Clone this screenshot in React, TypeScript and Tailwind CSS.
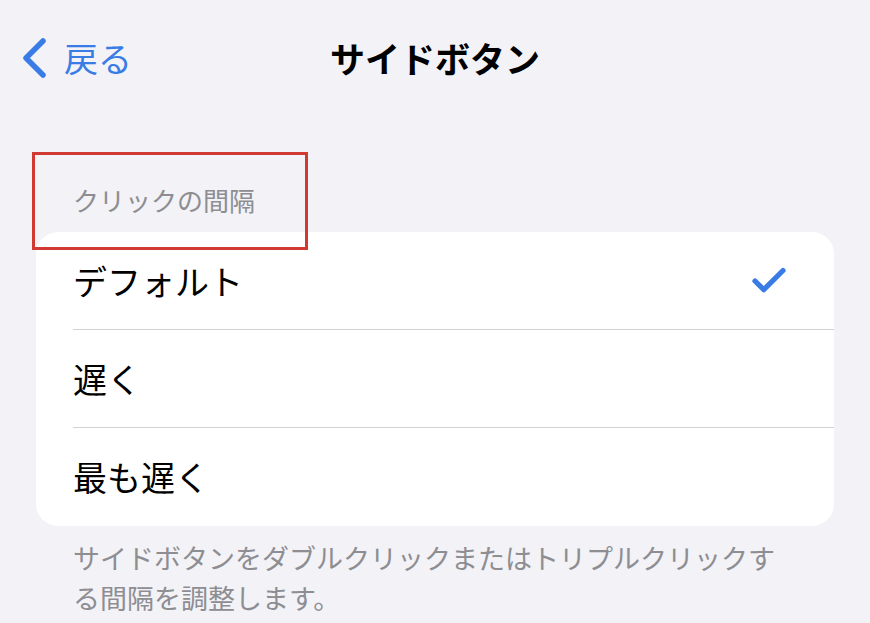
import { Check } from 'lucide-react';

const options = [
  { label: 'デフォルト', selected: true },
  { label: '遅く', selected: false },
  { label: '最も遅く', selected: false },
];

export default function App() {
  return (
    <div
      className="w-[870px] h-[623px] overflow-hidden bg-[#f2f2f7] text-black"
      style={{ fontFamily: '"Noto Sans CJK JP", "Noto Sans", sans-serif' }}
    >
      {/* nav bar */}
      <div className="grid grid-cols-[1fr_auto_1fr] items-center h-[118px] pb-[2px] px-[20px]">
        <div className="flex items-center gap-[16px] text-[#3a7ce6]">
          <svg width="28" height="42" viewBox="0 0 28 42" fill="none">
            <path d="M23 4 L6 21 L23 38" stroke="currentColor" strokeWidth="5.5" strokeLinecap="round" strokeLinejoin="round" />
          </svg>
          <span className="text-[34px] leading-none">戻る</span>
        </div>
        <div className="text-[35px] leading-[42px] font-bold">サイドボタン</div>
        <div />
      </div>

      {/* section header with red highlight */}
      <div className="relative pt-[64px] pb-[14px] pl-[73px]">
        <div className="absolute left-[32px] top-[34px] w-[276px] h-[98px] border-[3px] border-[#d13a33] z-10" />
        <div className="text-[26px] leading-[36px] text-[#8d8d92]">クリックの間隔</div>
      </div>

      {/* options card */}
      <div className="mx-[36px] bg-white rounded-[22px] overflow-hidden">
        {options.map((o, i) => (
          <div key={i} className="pl-[37px]">
            <div className={`h-[98px] flex items-center justify-between pr-[44px] ${i < options.length - 1 ? 'border-b border-[#d1d1d6]' : ''}`}>
              <span className="text-[34px] leading-none">{o.label}</span>
              {o.selected && <Check size={42} strokeWidth={3} className="text-[#3a7ce6]" />}
            </div>
          </div>
        ))}
      </div>

      {/* footer */}
      <p className="pl-[73px] pr-[90px] pt-[12px] text-[27px] leading-[40px] text-[#8d8d92]">
        サイドボタンをダブルクリックまたはトリプルクリックする間隔を調整します。
      </p>
    </div>
  );
}
